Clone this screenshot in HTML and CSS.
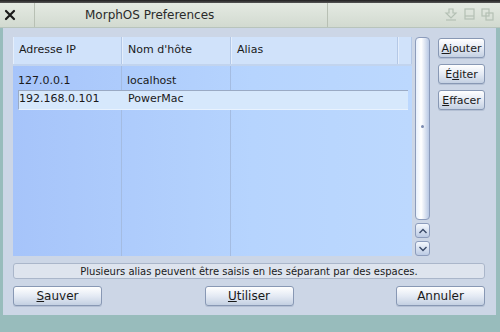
FILE: index.html
```html
<!DOCTYPE html>
<html lang="fr">
<head>
  <meta charset="UTF-8">
  <title>MorphOS Preferences</title>
  <link rel="stylesheet" href="styles.css">
</head>
<body>

<div class="topbar"></div>
<div class="titlebar">
  <div class="close-gadget">
    <svg width="12" height="12" viewBox="0 0 12 12"><path d="M2 2l8 8M10 2l-8 8" stroke="#1a1a1a" stroke-width="2.2" stroke-linecap="round"/></svg>
  </div>
  <div class="title">MorphOS Preferences</div>
  <div class="gadgets">
    <svg width="60" height="20" viewBox="0 0 60 20">
      <g fill="none" stroke="#b4c0b4" stroke-width="1.2">
        <path d="M9 4h4v4h3l-5 5-5-5h3z"/>
        <path d="M6 15h10"/>
        <rect x="25" y="4" width="9" height="10"/>
        <path d="M25 11h9"/>
        <rect x="42" y="4" width="7" height="7"/>
        <rect x="46" y="8" width="7" height="7"/>
      </g>
    </svg>
  </div>
</div>

<div class="window">
  <div class="main">
    <div class="list">
      <div class="list-head">
        <div class="col c1">Adresse IP</div>
        <div class="col c2">Nom d'hôte</div>
        <div class="col c3">Alias</div>
        <div class="col c4"></div>
      </div>
      <div class="list-body">
        <div class="row">
          <div class="col c1">127.0.0.1</div>
          <div class="col c2">localhost</div>
          <div class="col c3"></div>
        </div>
        <div class="row selected">
          <div class="col c1">192.168.0.101</div>
          <div class="col c2">PowerMac</div>
          <div class="col c3"></div>
        </div>
      </div>
    </div>

    <div class="scroller">
      <div class="track"><span class="knob-dot"></span></div>
      <div class="arrow">
        <svg width="10" height="8" viewBox="0 0 10 8"><path d="M1.5 6L5 2.5 8.5 6" fill="none" stroke="#3a4a68" stroke-width="1.4"/></svg>
      </div>
      <div class="arrow">
        <svg width="10" height="8" viewBox="0 0 10 8"><path d="M1.5 2L5 5.5 8.5 2" fill="none" stroke="#3a4a68" stroke-width="1.4"/></svg>
      </div>
    </div>

    <div class="side-buttons">
      <button class="btn"><u>A</u>jouter</button>
      <button class="btn">É<u>d</u>iter</button>
      <button class="btn"><u>E</u>ffacer</button>
    </div>
  </div>

  <div class="info">Plusieurs alias peuvent être saisis en les séparant par des espaces.</div>

  <div class="bottom-buttons">
    <button class="btn wide"><u>S</u>auver</button>
    <button class="btn wide"><u>U</u>tiliser</button>
    <button class="btn wide">Annuler</button>
  </div>
</div>

</body>
</html>
```

FILE: styles.css
```css
body {
  margin: 0;
  width: 500px;
  height: 332px;
  overflow: hidden;
  font-family: "DejaVu Sans", sans-serif;
  font-size: 11px;
  color: #1a1a1a;
  background-color: #98bcbc; /* teal desktop around the window */
}
.topbar {
  height: 3px;
  background: linear-gradient(#202020, #555);
}
.titlebar {
  display: flex;
  height: 24px;
  background: linear-gradient(#e4eae2, #d2dad0);
  border-bottom: 1px solid #b8c4bc;
  color: #2a2a2a;
}
.close-gadget {
  width: 35px;
  border-right: 1px solid #b8c0b4;
  display: flex;
  align-items: center;
  padding-left: 4px;
  box-sizing: border-box;
}
.title {
  flex: 1;
  line-height: 24px;
  font-size: 12px;
  padding-left: 50px;
  border-right: 1px solid #b8c0b4;
}
.gadgets {
  width: 172px;
  display: flex;
  justify-content: flex-end;
  align-items: center;
}
.window {
  margin: 0 4px 0 3px;
  height: 287px;
  padding: 9px 11px 0 10px;
  box-sizing: border-box;
  background-color: #ccd6e6;
}
.main {
  display: flex;
  height: 219px;
}
.list {
  width: 399px;
  display: flex;
  flex-direction: column;
  background: linear-gradient(to right, #a6c4fa, #b6d4fe 60%, #bcd8fe);
}
.list-head {
  display: flex;
  height: 27px;
  background-color: #d0e2fa;
  border-bottom: 2px solid #c2d4ee;
}
.list-head .col {
  line-height: 25px;
  border-right: 1px solid #b4c8e6;
  border-left: 1px solid #e4eefc;
}
.col {
  padding-left: 5px;
  box-sizing: border-box;
}
.c1 { width: 109px; }
.c2 { width: 109px; }
.c3 { width: 167px; }
.c4 { flex: 1; }
.list-body {
  flex: 1;
  display: flex;
  flex-direction: column;
  padding-top: 6px;
  background:
    linear-gradient(#a4bce2, #a4bce2) 108px 0 / 1px 100% no-repeat,
    linear-gradient(#a4bce2, #a4bce2) 217px 0 / 1px 100% no-repeat;
}
.row {
  display: flex;
  height: 18px;
  line-height: 18px;
}
.row.selected {
  margin: 0 4px 0 5px;
  background-color: #d6e8fc;
  border-top: 1px solid #9aaac4;
  border-left: 1px solid #9aaac4;
  border-bottom: 1px solid #e8f2fe;
  line-height: 16px;
}
.row.selected .c1 { width: 104px; padding-left: 0; }
.scroller {
  width: 15px;
  margin-left: 3px;
  display: flex;
  flex-direction: column;
  gap: 3px;
}
.track {
  flex: 1;
  position: relative;
  border: 1px solid #8c9cbc;
  border-radius: 4px;
  background: linear-gradient(to right, #e8f0fc, #ffffff 40%, #b8c8e4);
}
.knob-dot {
  position: absolute;
  left: 5px;
  top: 87px;
  width: 3px;
  height: 3px;
  border-radius: 50%;
  background-color: #7a8ab0;
}
.arrow {
  height: 15px;
  display: flex;
  align-items: center;
  justify-content: center;
  border: 1px solid #8c9cbc;
  border-radius: 3px;
  background: linear-gradient(#f4f8fe, #bccbe4);
  box-sizing: border-box;
}
.side-buttons {
  margin-left: 8px;
  display: flex;
  flex-direction: column;
  gap: 6px;
  padding-top: 1px;
}
.btn {
  width: 47px;
  height: 20px;
  padding: 0;
  font-family: "DejaVu Sans", sans-serif;
  font-size: 11px;
  color: #1a1a1a;
  border: 1px solid #8898b4;
  border-radius: 3px;
  background: linear-gradient(#ffffff, #e4eaf4 50%, #c4d0e2);
  box-shadow: 0 1px 0 #b4c0d4;
}
.info {
  margin-top: 7px;
  height: 16px;
  line-height: 15px;
  font-size: 10px;
  text-align: center;
  border: 1px solid #aab6ca;
  border-radius: 3px;
  background-color: #dee4ee;
  box-sizing: border-box;
}
.bottom-buttons {
  margin-top: 7px;
  display: flex;
  justify-content: space-between;
}
.btn.wide {
  width: 89px;
  font-size: 12px;
}
```
